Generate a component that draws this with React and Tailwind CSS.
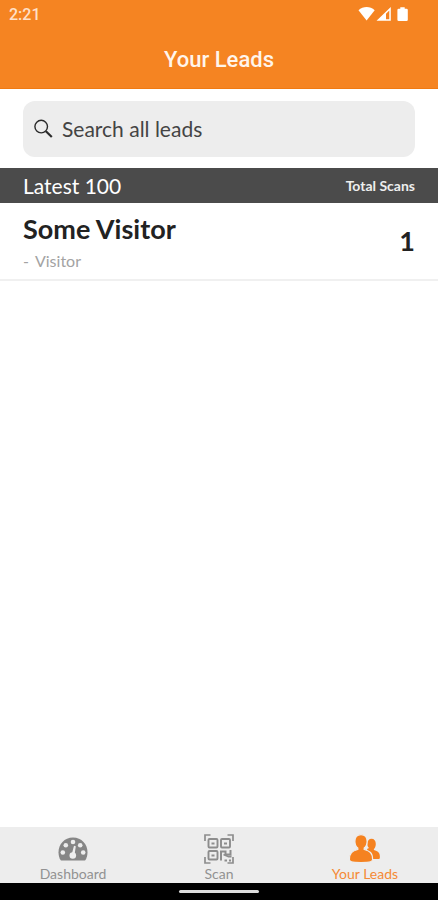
function StatusBar() {
  return (
    <div className="flex h-7 items-center justify-between pl-[9px] pr-[30px] text-white">
      <time className="pt-px font-['Roboto',sans-serif] text-base leading-7 font-medium text-[#ffe0c8]">2:21</time>
      <svg className="h-4 w-[50px]" viewBox="0 0 50 16" fill="currentColor" aria-hidden="true">
        <path d="M.5 4.2C5-.1 12.2-.1 16.700 4.200L8.600 14.500Z" />
        <path fillRule="evenodd" d="M18.500 14.800 32.800 1V14.800ZM28 7.700V13.300H31.300V4.500Z" />
        <path d="M42.300 1.200h4.400v1.500h1.800q1.300 0 1.300 1.300v9.800q0 1.300-1.300 1.300h-7.800q-1.300 0-1.300-1.300V4q0-1.300 1.300-1.300h1.600z" />
      </svg>
    </div>
  );
}

function SearchIcon() {
  return (
    <svg className="size-5 shrink-0" viewBox="0 0 20 20" fill="none" stroke="#2b2b2b" aria-hidden="true">
      <circle cx="7.200" cy="7.600" r="6.300" strokeWidth="1.400" />
      <path d="m11.900 12.300 5.900 5.700" strokeWidth="2.200" />
    </svg>
  );
}

function DashboardIcon() {
  return (
    <svg className="h-[30px] w-8" viewBox="0 0 32 30" aria-hidden="true">
      <path d="M3.500 26C-2 15.500 4.500 3.500 16 3.500S34 15.500 28.500 26Q28 26.500 27 26.500H5Q4 26.500 3.500 26Z" fill="#868686" />
      <g fill="#ededed">
        <circle cx="5.800" cy="18.500" r="2.300" />
        <circle cx="8.800" cy="11.200" r="2.300" />
        <circle cx="16" cy="8" r="2.300" />
        <circle cx="23.200" cy="11.200" r="2.300" />
        <circle cx="26.200" cy="18.500" r="2.300" />
        <circle cx="15.800" cy="21.500" r="3.300" />
        <path d="m14.800 20 2.200-8.200 1.800.4L17.500 21Z" />
      </g>
    </svg>
  );
}

function ScanIcon() {
  return (
    <svg className="h-[30px] w-8" viewBox="0 0 32 30" fill="none" stroke="#8d8d8d" aria-hidden="true">
      <path d="M2 7V1h5.500M24.500 1H30v6M30 23v6h-5.500M7.500 29H2v-6" strokeWidth="1.700" />
      <rect x="5.500" y="5" width="9" height="8.500" rx="1" strokeWidth="1.900" />
      <rect x="18" y="5" width="9" height="8.500" rx="1" strokeWidth="1.900" />
      <rect x="5.500" y="17" width="9" height="8.500" rx="1" strokeWidth="1.900" />
      <path d="M8.500 9.500h3M21 9.500h3M8.500 21.500h3" strokeWidth="2" />
      <path d="M18 26.500V17.500h4.500v3H27.500V16" strokeWidth="2" />
      <path d="M20.500 20.500l5 2h3M21.500 26.500H24M26 26.500h2" strokeWidth="1.800" />
    </svg>
  );
}

function LeadsIcon() {
  return (
    <svg className="h-[30px] w-8" viewBox="0 0 32 30" fill="#f58220" aria-hidden="true">
      <path d="M22.500 4.800c2.700 0 4.300 2 4.300 5.200 0 2.200-.8 4.100-1.900 5v1.100c3.900 1.200 6 2.400 6 6.800 0 1.500-.5 2.200-1.700 2.200H21l-3-10 2-1c-1-1-1.700-2.400-1.700-4.300 0-3 1.700-5 4.200-5Z" />
      <path stroke="#ededed" strokeWidth="1.200" d="M12 .6c3.900 0 6.100 2.600 6.100 6.600 0 3-1.200 5.500-2.900 6.800V15.500c5.500 1.500 8.400 3.200 8.400 10 0 2.300-1.800 3-11.600 3S.4 27.800.4 25.500c0-6.800 2.900-8.500 8.400-10V14C7.100 12.700 5.900 10.200 5.900 7.200 5.900 3.200 8.100.6 12 .6Z" />
    </svg>
  );
}

const tabs = [
  { label: "Dashboard", Icon: DashboardIcon, active: false },
  { label: "Scan", Icon: ScanIcon, active: false },
  { label: "Your Leads", Icon: LeadsIcon, active: true },
];

export default function App() {
  return (
    <div className="flex min-h-screen flex-col bg-white font-['Lato',sans-serif] text-[#222]">
      <header className="border-b border-[#f07a12] bg-[#f58422]">
        <StatusBar />
        <h1 className="pt-5 pb-4 text-center font-['Roboto',sans-serif] text-[22px] leading-6 font-medium text-[#fff5ec]">
          Your Leads
        </h1>
      </header>

      <main className="flex-1">
        <div className="px-[23px] pt-3 pb-[11px]">
          <label className="flex h-14 items-center gap-2 rounded-xl bg-[#ededed] px-[11px]">
            <SearchIcon />
            <input
              type="search"
              aria-label="Search all leads"
              placeholder="Search all leads"
              className="min-w-0 flex-1 bg-transparent text-[21px] leading-7 text-[#333] outline-none placeholder:text-[#444]"
            />
          </label>
        </div>

        <div className="flex h-[35px] items-center justify-between bg-[#4b4b4b] px-[23px] text-white">
          <h2 className="text-[21px] leading-7">Latest 100</h2>
          <span className="text-[14px] leading-5 font-bold text-[#eee]">Total Scans</span>
        </div>

        <ul>
          <li className="flex items-center justify-between border-b-2 border-[#f0f0f0] px-[23px] pt-3 pb-2">
            <div>
              <h3 className="text-[27px] leading-7 font-bold">Some Visitor</h3>
              <p className="flex gap-1.5 pt-2 text-base leading-5 text-[#a3a3a3]">
                <span>-</span>
                <span>Visitor</span>
              </p>
            </div>
            <span className="pb-1 text-[27px] leading-7 font-bold">1</span>
          </li>
        </ul>
      </main>

      <nav className="grid h-14 grid-cols-3 bg-[#ededed]">
        {tabs.map(({ label, Icon, active }) => (
          <button
            key={label}
            type="button"
            aria-current={active ? "page" : undefined}
            className={`flex flex-col items-center pt-[7px] text-[14px] leading-5 ${active ? "text-[#f58a35]" : "text-[#929292]"}`}
          >
            <Icon />
            {label}
          </button>
        ))}
      </nav>
      <div className="flex h-[17px] items-center justify-center bg-black">
        <div className="h-[3px] w-20 rounded-full bg-[#ddd]" />
      </div>
    </div>
  );
}
